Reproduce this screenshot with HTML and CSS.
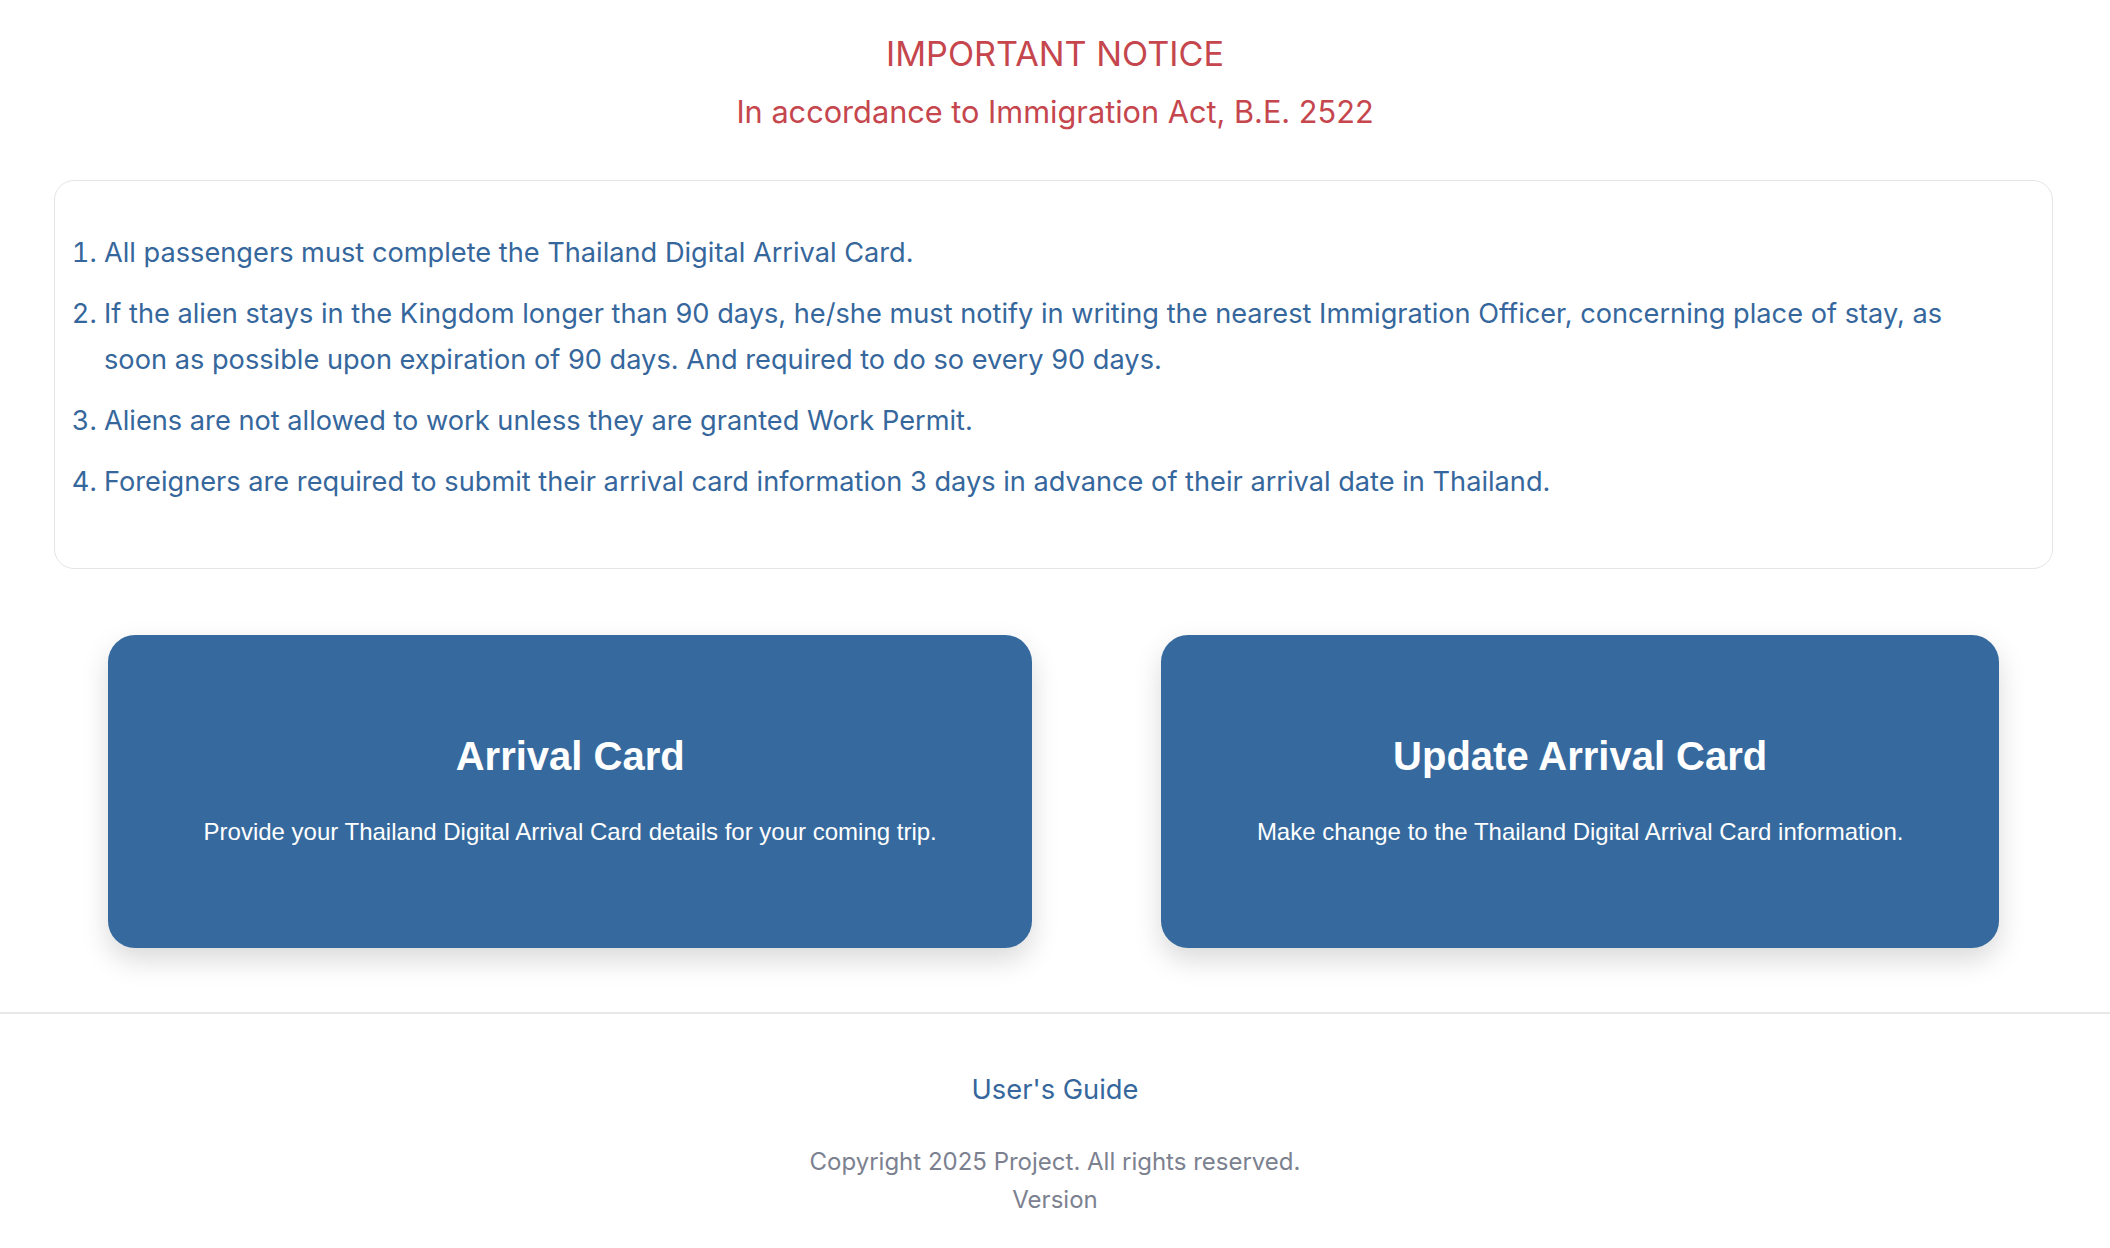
FILE: index.html
```html
<!DOCTYPE html>
<html lang="en">
<head>
	<meta charset="UTF-8">
	<title>Thailand Digital Arrival Card</title>
	<link rel="stylesheet" href="styles.css">
</head>
<body>
<div class="page">
	<header class="notice-head">
		<h1 class="notice-title">IMPORTANT NOTICE</h1>
		<h2 class="notice-sub">In accordance to Immigration Act, B.E. 2522</h2>
	</header>

	<div class="notice-box">
		<ol class="notice-list">
			<li>All passengers must complete the Thailand Digital Arrival Card.</li>
			<li>If the alien stays in the Kingdom longer than 90 days, he/she must notify in writing the nearest Immigration Officer, concerning place of stay, as soon as possible upon expiration of 90 days. And required to do so every 90 days.</li>
			<li>Aliens are not allowed to work unless they are granted Work Permit.</li>
			<li>Foreigners are required to submit their arrival card information 3 days in advance of their arrival date in Thailand.</li>
		</ol>
	</div>

	<div class="cards">
		<a class="card" href="#">
			<div class="card-title">Arrival Card</div>
			<div class="card-desc">Provide your Thailand Digital Arrival Card details for your coming trip.</div>
		</a>
		<a class="card" href="#">
			<div class="card-title">Update Arrival Card</div>
			<div class="card-desc">Make change to the Thailand Digital Arrival Card information.</div>
		</a>
	</div>
</div>

<footer class="footer">
	<a class="guide-link" href="#">User's Guide</a>
	<div class="copyright">
		<div>Copyright 2025 Project. All rights reserved.</div>
		<div>Version</div>
	</div>
</footer>
</body>
</html>
```

FILE: styles.css
```css
* {
	margin: 0;
	padding: 0;
	box-sizing: border-box;
}

body {
	background: #ffffff;
	font-family: Inter, "Noto Sans", sans-serif;
	color: #36679c;
}

/* header */
.notice-head {
	padding-top: 33px;
	text-align: center;
	color: #c5464d;
}

.notice-title {
	font-size: 34.2px;
	font-weight: 400;
	line-height: 42px;
	margin-bottom: 18px;
}

.notice-sub {
	font-size: 30.7px;
	font-weight: 400;
	line-height: 38px;
}

/* notice box */
.notice-box {
	margin: 49px 57px 0 54px;
	border: 1px solid #e3e5e8;
	border-radius: 20px;
	padding: 49px 60px 48px 17px;
}

.notice-list {
	padding-left: 32px;
	font-size: 27.2px;
	line-height: 46px;
}

.notice-list > li {
	margin-bottom: 15px;
}

/* cards */
.cards {
	display: flex;
	gap: 129px;
	margin-top: 66px;
	padding: 0 111px 0 108px;
}

.card {
	flex: 1 1 auto;
	display: block;
	padding: 97px 40px 98px;
	border-radius: 27px;
	background: #366a9e;
	color: #ffffff;
	text-align: center;
	text-decoration: none;
	font-family: "Liberation Sans", Arial, sans-serif;
	box-shadow: 0 12px 28px rgba(0, 0, 0, 0.15);
}

.card-title {
	font-size: 40px;
	font-weight: 700;
	line-height: 48px;
	margin-bottom: 34px;
}

.card-desc {
	font-size: 24px;
	line-height: 36px;
	white-space: nowrap;
}

/* footer */
.footer {
	margin-top: 64px;
	border-top: 2px solid #e8e8e8;
	padding-top: 56px;
	text-align: center;
}

.guide-link {
	font-size: 27.3px;
	line-height: 39px;
	color: #36679c;
	text-decoration: none;
}

.copyright {
	margin-top: 34px;
	font-size: 24px;
	line-height: 38.4px;
	color: #7c8190;
}
```
